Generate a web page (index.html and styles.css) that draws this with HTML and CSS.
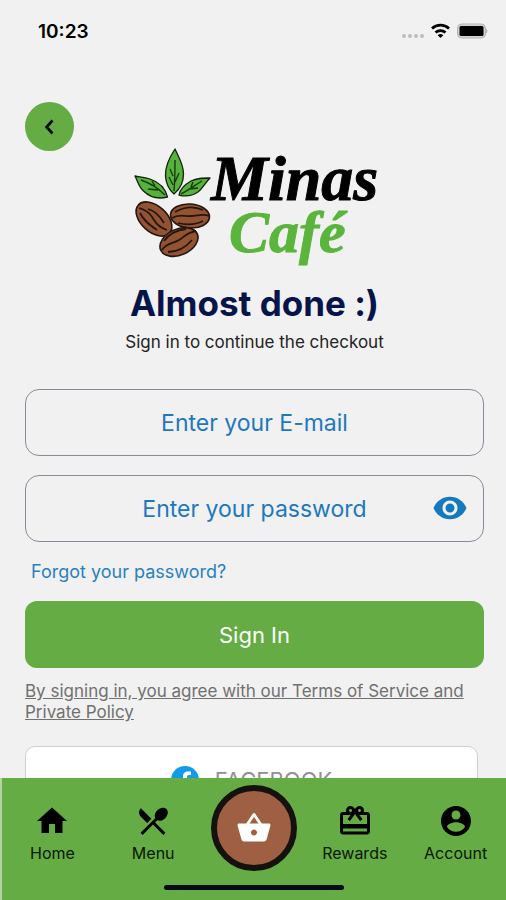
FILE: index.html
```html
<!DOCTYPE html>
<html lang="en">
<head>
  <meta charset="utf-8">
  <meta name="viewport" content="width=device-width, initial-scale=1">
  <title>Minas Café - Sign In</title>
  <link rel="stylesheet" href="styles.css">
</head>
<body>

<!-- Status bar -->
<header class="status-bar">
  <span class="time">10:23</span>
  <svg class="status-icons" width="88" height="20" viewBox="0 0 88 20" aria-hidden="true">
    <g fill="#bdbdbd">
      <circle cx="4" cy="15" r="2"/><circle cx="10" cy="15" r="2"/><circle cx="16" cy="15" r="2"/><circle cx="22" cy="15" r="2"/>
    </g>
    <g fill="none" stroke="#000" stroke-width="2.7">
      <path d="M32 7.5a12.5 12.5 0 0 1 17 0"/>
      <path d="M35.5 11.5a7.5 7.5 0 0 1 10 0"/>
    </g>
    <path d="M37.7 14.2a4.2 4.2 0 0 1 5.6 0L40.5 17z"/>
    <rect x="57.5" y="3" width="28" height="14" rx="4" fill="#d2d2d2" stroke="#b5b5b5"/>
    <rect x="59.5" y="5" width="24" height="10" rx="1.5"/>
    <path d="M86.3 7.5q2 2.500 0 5z" fill="#999"/>
  </svg>
</header>

<main>
  <button class="back" type="button" aria-label="Back">
    <svg width="24" height="24" viewBox="0 0 24 24"><path d="M14.500 5.500l-6 6.500 6 6.500" fill="none" stroke="#000" stroke-width="2.600"/></svg>
  </button>

  <!-- Logo -->
  <svg class="logo" width="248" height="126" viewBox="0 0 248 126" role="img" aria-label="Minas Café">
    <g fill="#58b13a" stroke="#10230c" stroke-width="1.300" stroke-linejoin="round">
      <path d="M44 3C38 12 34 20 34.500 30c.5 9 4 14 8.500 18 6-5 9.500-12 9.500-20C52.500 18 48 12 44 3z"/>
      <path d="M4 30c4 1 9 1 15 3 9 3 15 8 17.500 18-10 2.500-18 0-24-6C8 41 7 36 4 30z"/>
      <path d="M79 32c-8 0-13 0-19 3-7 4-11 8-12 14 7 2 13 1 19-3 5-4 7-9 12-14z"/>
    </g>
    <g fill="none" stroke="#173a10" stroke-width="1.400">
      <path d="M43 45c1-11 1-20 1-31M42 39l-4-8M44 36l4-9M42 30l-3-7"/>
      <path d="M34 49C27 42 19 37 10 34M27 44l-10-1M24 40l-3-5"/>
      <path d="M50 48c8-4 14-9 21-13M58 43l9-1M60 41l2-5"/>
    </g>
    <g fill="#925333" stroke="#24150f" stroke-width="1.600">
      <ellipse cx="23" cy="73" rx="21" ry="13" transform="rotate(42 23 73)"/>
      <ellipse cx="59" cy="70" rx="19.500" ry="12" transform="rotate(4 59 70)"/>
      <ellipse cx="48" cy="96" rx="20" ry="13" transform="rotate(-24 48 96)"/>
    </g>
    <g fill="none" stroke="#24150f" stroke-width="1.800">
      <path d="M8 62c8 2 12 6 15 12 3 5 7 8 13 10M9 67c4 8 10 12 17 17M17 63c7 2 12 7 16 14"/>
      <path d="M41 72c8-5 13-1 19-2 6 0 12-3 18 0M44 66c9-5 19-6 28-2M47 77c8 2 17 2 25-2"/>
      <path d="M31 104c5-8 11-6 17-10 5-3 9-8 17-9M33 95c5-7 13-11 22-12M37 106c9 0 18-5 24-12"/>
    </g>
    <text class="logo-minas" x="80" y="54">Minas</text>
    <text class="logo-cafe" x="98" y="106">Café</text>
  </svg>

  <h1>Almost done :)</h1>
  <p class="subtitle">Sign in to continue the checkout</p>

  <form>
    <input class="field" type="email" placeholder="Enter your E-mail" aria-label="E-mail">
    <div class="password">
      <input class="field" type="password" placeholder="Enter your password" aria-label="Password">
      <button class="show-password" type="button" aria-label="Show password">
        <svg width="36" height="36" viewBox="0 0 24 24" fill="#1479bd"><path d="M12 4.500C7 4.500 2.730 7.610 1 12c1.730 4.390 6 7.500 11 7.500s9.270-3.110 11-7.500c-1.730-4.390-6-7.500-11-7.500zM12 17c-2.760 0-5-2.240-5-5s2.240-5 5-5 5 2.240 5 5-2.240 5-5 5zm0-8c-1.660 0-3 1.340-3 3s1.340 3 3 3 3-1.340 3-3-1.340-3-3-3z"/></svg>
      </button>
    </div>
    <a class="forgot" href="#">Forgot your password?</a>
    <button class="sign-in" type="submit">Sign In</button>
  </form>

  <a class="terms" href="#">By signing in, you agree with our Terms of Service and Private Policy</a>

  <button class="facebook" type="button">
    <svg width="28" height="28" viewBox="0 0 28 28"><circle cx="14" cy="14" r="14" fill="#139be9"/><path d="M12 28V17H8v-4h4v-2.500C12 7 14 5.500 17 5.500h3V9h-2c-1.500 0-2 .7-2 2v2h4l-.7 4H16v11z" fill="#fff"/></svg>
    FACEBOOK
  </button>
</main>

<!-- Bottom navigation -->
<nav class="tab-bar">
  <a href="#">
    <svg width="36" height="36" viewBox="0 0 24 24"><path d="M10 20v-6h4v6h5v-8h3L12 3 2 12h3v8z"/></svg>
    Home
  </a>
  <a href="#">
    <svg width="36" height="36" viewBox="0 0 24 24"><path d="M8.100 13.340l2.830-2.830L3.910 3.500c-1.560 1.560-1.560 4.090 0 5.660l4.190 4.180zm6.780-1.810c1.530.71 3.680.21 5.270-1.380 1.910-1.910 2.280-4.650.81-6.120-1.460-1.460-4.200-1.100-6.120.81-1.590 1.590-2.090 3.740-1.380 5.270L3.700 19.870l1.410 1.410L12 14.410l6.880 6.880 1.410-1.410L13.410 13l1.470-1.470z"/></svg>
    Menu
  </a>
  <a class="basket" href="#" aria-label="Basket">
    <svg width="36" height="36" viewBox="0 0 24 24" fill="#fff"><path d="M17.210 9l-4.380-6.560c-.19-.28-.51-.42-.83-.42-.32 0-.64.14-.83.43L6.790 9H2c-.55 0-1 .45-1 1 0 .09.010.18.040.27l2.540 9.270c.23.84 1 1.460 1.920 1.460h13c.92 0 1.690-.62 1.930-1.460l2.540-9.270L23 10c0-.55-.45-1-1-1h-4.790zM9 9l3-4.400L15 9H9zm3 8c-1.100 0-2-.9-2-2s.9-2 2-2 2 .9 2 2-.9 2-2 2z"/></svg>
  </a>
  <a href="#">
    <svg width="36" height="36" viewBox="0 0 24 24"><path d="M20 6h-2.180c.11-.31.18-.65.18-1 0-1.660-1.340-3-3-3-1.050 0-1.960.54-2.500 1.350l-.5.67-.5-.68C10.960 2.540 10.050 2 9 2 7.340 2 6 3.340 6 5c0 .35.070.69.18 1H4c-1.110 0-1.990.89-1.990 2L2 19c0 1.110.89 2 2 2h16c1.110 0 2-.89 2-2V8c0-1.110-.89-2-2-2zm-5-2c.55 0 1 .45 1 1s-.45 1-1 1-1-.45-1-1 .45-1 1-1zM9 4c.55 0 1 .45 1 1s-.45 1-1 1-1-.45-1-1 .45-1 1-1zm11 15H4v-2h16v2zm0-5H4V8h5.080L7 10.830 8.620 12 11 8.760l1-1.360 1 1.360L15.380 12 17 10.830 14.920 8H20v6z"/></svg>
    Rewards
  </a>
  <a href="#">
    <svg width="36" height="36" viewBox="0 0 24 24"><path d="M12 2C6.480 2 2 6.480 2 12s4.480 10 10 10 10-4.480 10-10S17.520 2 12 2zm0 3c1.660 0 3 1.340 3 3s-1.340 3-3 3-3-1.340-3-3 1.340-3 3-3zm0 14.200c-2.500 0-4.710-1.280-6-3.220.030-1.990 4-3.080 6-3.080 1.990 0 5.970 1.090 6 3.080-1.290 1.940-3.500 3.220-6 3.220z"/></svg>
    Account
  </a>
  <span class="home-indicator"></span>
</nav>

</body>
</html>
```
FILE: styles.css
```css
* { box-sizing: border-box; }
body {
  display: flex; flex-direction: column; height: 100vh; margin: 0;
  font-family: Inter, "Liberation Sans", sans-serif; background: #f1f1f1; color: #000;
}
button, input { font-family: inherit; }
button { cursor: pointer; border: none; padding: 0; }

.status-bar {
  display: flex; justify-content: space-between; align-items: center; flex-shrink: 0;
  height: 62px; padding: 0 18px 0 38px;
}
.time { font-size: 19px; font-weight: 600; }

/* only the content scrolls, the tab bar stays at the bottom */
main {
  display: flex; flex-direction: column; flex: 1; min-height: 0;
  padding: 40px 22px 24px 25px; overflow-y: auto; scrollbar-width: none;
}
main > * { flex-shrink: 0; }
.back {
  display: flex; align-items: center; justify-content: center;
  width: 49px; height: 49px; border-radius: 50%; background: #64ac43;
}

/* logo starts a little above the bottom of the back button */
.logo { align-self: center; margin-top: -5px; }
.logo-minas, .logo-cafe { font-family: "Liberation Serif", serif; font-weight: bold; font-style: italic; }
.logo-minas { font-size: 64px; stroke: #000; stroke-width: 1px; }
.logo-cafe { font-size: 60px; fill: #5ab53c; stroke: #5ab53c; stroke-width: 1px; }

h1 { margin: 10px 0 0; font-size: 35px; line-height: 42px; text-align: center; color: #051449; }
.subtitle { margin: 6px 0 0; font-size: 17px; line-height: 24px; text-align: center; color: #222; }

form { display: flex; flex-direction: column; margin-top: 35px; }
.field {
  width: 100%; height: 67px; padding: 0 50px;
  border: 1px solid #858b99; border-radius: 14px; background: transparent;
  font-size: 23px; text-align: center; color: #1f78bd; outline: none;
}
.field::placeholder { color: #1f78bd; opacity: 1; }
.password { position: relative; margin-top: 19px; }
.show-password {
  position: absolute; right: 16px; top: 15px;
  width: 36px; height: 36px; background: none;
}
.forgot {
  align-self: flex-start; margin: 18px 6px 17px; font-size: 18px; line-height: 24px;
  color: #2b80c0; text-decoration: none;
}
.sign-in { height: 67px; border-radius: 12px; background: #64ac43; color: #fff; font-size: 22px; }
.terms { margin-top: 13px; font-size: 17px; line-height: 21px; color: #707070; }
.facebook {
  display: flex; align-items: center; justify-content: center; gap: 16px;
  height: 67px; margin: 23px 6px 0 0;
  border: 1px solid #d0d0d0; border-radius: 10px; background: #fff;
  font-size: 22px; color: #909090;
}

.tab-bar {
  position: relative; flex-shrink: 0;
  display: grid; grid-template-columns: repeat(5, 1fr); align-items: start;
  height: 122px; border-left: 2px solid #b5d4a6; background: #64ac43;
}
.tab-bar a {
  display: flex; flex-direction: column; align-items: center; gap: 4px;
  padding-top: 25px; font-size: 16px; line-height: 20px; color: #0b1608; text-decoration: none;
}
.tab-bar .basket {
  justify-content: center; justify-self: center;
  width: 86px; height: 86px; margin-top: 7px; padding: 0;
  border: 6px solid #15110f; border-radius: 50%; background: #9f5f42;
}
.home-indicator {
  position: absolute; left: 50%; bottom: 10px;
  width: 180px; height: 5px; margin-left: -90px; border-radius: 3px; background: #080b18;
}
```
